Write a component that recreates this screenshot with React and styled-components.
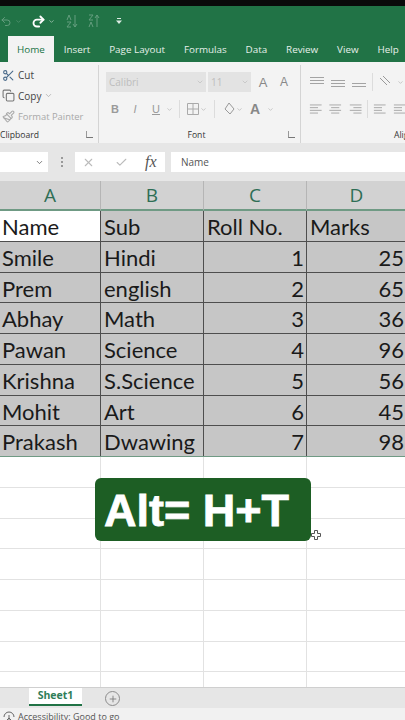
import React from "react";
import styled, { createGlobalStyle } from "styled-components";
import { Scissors, Copy, Paintbrush, X, Check, Plus, ChevronDown, Redo2, Undo2 } from "lucide-react";

const GlobalStyle = createGlobalStyle`
  html, body { margin: 0; padding: 0; background: #fff; }
  body { font-family: "Open Sans", "Liberation Sans", sans-serif; }
`;

const Page = styled.div`
  width: 405px;
  height: 720px;
  overflow: hidden;
  display: flex;
  flex-direction: column;
  position: relative;
`;

const BlackBar = styled.div`
  height: 6px;
  background: #0a0a0a;
`;

const TitleBar = styled.div`
  height: 30px;
  background: #217346;
  display: flex;
  align-items: center;
  color: #fff;
`;

const QuickIcon = styled.span`
  display: flex;
  width: ${(p) => p.$w || 14}px;
  margin-left: ${(p) => p.$ml || 0}px;
  justify-content: center;
  opacity: ${(p) => (p.$dim ? 0.3 : 1)};
`;

const TabRow = styled.div`
  height: 26px;
  background: #217346;
  display: flex;
  padding-left: 8px;
`;

const Tab = styled.div`
  padding: 0 ${(p) => (p.$active ? 9 : 9.45)}px;
  margin-right: ${(p) => (p.$active ? 0.5 : 0)}px;
  display: flex;
  align-items: center;
  font-size: 9.85px;
  white-space: nowrap;
  background: ${(p) => (p.$active ? "#f3f3f3" : "transparent")};
  color: ${(p) => (p.$active ? "#217346" : "#e6f0ea")};
`;

const Ribbon = styled.div`
  height: 81px;
  background: #f3f3f3;
  display: flex;
`;

const Group = styled.div`
  width: ${(p) => p.$w}px;
  flex: none;
  position: relative;
  display: flex;
  flex-direction: column;
  border-right: ${(p) => (p.$last ? "none" : "1px solid #d4d4d4")};
  margin: 3px 0 0;
`;

const GroupBody = styled.div`
  height: 62px;
  flex: none;
  box-sizing: border-box;
  display: flex;
  flex-direction: column;
  gap: ${(p) => p.$gap || 0}px;
  padding: ${(p) => p.$pad || "0"};
`;

const GroupLabel = styled.div`
  height: 16px;
  font-size: 8.6px;
  line-height: 16px;
  color: #333;
  text-align: ${(p) => p.$align || "center"};
  padding-left: ${(p) => p.$pl || 0}px;
  padding-right: ${(p) => p.$pr || 0}px;
  white-space: nowrap;
`;

const Launcher = styled.span`
  position: absolute;
  right: 5px;
  bottom: 5px;
  width: 6px;
  height: 6px;
  border-left: 1px solid #999;
  border-bottom: 1px solid #777;
`;

const ClipRow = styled.div`
  height: 20.5px;
  flex: none;
  display: flex;
  align-items: center;
  gap: 3px;
  padding-left: 2px;
  font-size: ${(p) => (p.$dim ? 9.4 : 10)}px;
  white-space: nowrap;
  color: ${(p) => (p.$dim ? "#a8a8a8" : "#444")};
`;

const ToolRow = styled.div`
  display: flex;
  align-items: center;
  height: ${(p) => p.$h || 20}px;
  gap: ${(p) => p.$gap || 0}px;
`;

const FontBox = styled.div`
  height: 20px;
  width: ${(p) => p.$w}px;
  margin-right: ${(p) => p.$mr || 0}px;
  background: #e3e3e3;
  color: #bdbdbd;
  font-size: 10px;
  line-height: 20px;
  padding: 0 2px 0 3px;
  box-sizing: border-box;
  display: flex;
  align-items: center;
  justify-content: space-between;
`;

const Glyph = styled.span`
  width: ${(p) => p.$w || 16}px;
  text-align: center;
  font-family: "Liberation Sans", sans-serif;
  font-size: ${(p) => p.$size || 11}px;
  font-weight: ${(p) => (p.$bold ? 700 : 400)};
  font-style: ${(p) => (p.$italic ? "italic" : "normal")};
  text-decoration: ${(p) => (p.$under ? "underline" : "none")};
  color: ${(p) => p.$color || "#9a9a9a"};
`;

const Divider = styled.span`
  width: 1px;
  height: 18px;
  background: #dcdcdc;
  margin: 0 ${(p) => p.$m ?? 4}px;
`;

const Gap = styled.div`
  height: 9px;
  background: #e6e6e6;
`;

const FormulaBar = styled.div`
  height: 20px;
  background: #e6e6e6;
  display: flex;
`;

const NameBox = styled.div`
  width: 48px;
  background: #fff;
  display: flex;
  align-items: center;
  justify-content: flex-end;
  padding-right: 4px;
  box-sizing: border-box;
`;

const Dots = styled.div`
  width: 27px;
  display: flex;
  flex-direction: column;
  align-items: center;
  justify-content: center;
  gap: 2px;
  span {
    width: 2px;
    height: 2px;
    background: #999;
  }
`;

const FxBox = styled.div`
  width: 90px;
  background: #fff;
  display: flex;
  align-items: center;
  padding-left: 7px;
  gap: 20px;
  box-sizing: border-box;
  color: #bbb;
`;

const Fx = styled.span`
  font-family: "Liberation Serif", serif;
  font-style: italic;
  font-size: 16px;
  color: #555;
  margin-left: -3px;
`;

const FormulaInput = styled.div`
  flex: 1;
  margin-left: 6px;
  background: #fff;
  font-size: 10px;
  line-height: 20px;
  padding-left: 10px;
  color: #555;
`;

const SheetArea = styled.div`
  flex: 1;
  min-height: 0;
  position: relative;
  overflow: hidden;
  padding-top: 9px;
  background: #e6e6e6;
`;

const Grid = styled.div`
  display: grid;
  grid-template-columns: 101px 103px 103px 100px;
  font-family: Lato, "Liberation Sans", sans-serif;
`;

const ColHead = styled.div`
  height: 30px;
  background: #d2d2d2;
  border-right: 1px solid #b5b5b5;
  border-bottom: 2px solid #6f9a84;
  box-sizing: border-box;
  display: flex;
  align-items: center;
  justify-content: center;
  font-family: "Open Sans", sans-serif;
  font-size: 19px;
  color: #2e6e55;
`;

const Cell = styled.div`
  height: 30.75px;
  box-sizing: border-box;
  background: ${(p) => (p.$white ? "#fff" : "#c6c6c6")};
  border-right: 1px solid #4e4e4e;
  border-bottom: 1px solid #4e4e4e;
  font-size: 22px;
  line-height: 31px;
  color: #1a1a1a;
  padding: 0 2px 0 ${(p) => (p.$first ? 2 : 3)}px;
  white-space: nowrap;
  overflow: hidden;
  text-align: ${(p) => (p.$right ? "right" : "left")};
`;

const Blank = styled.div`
  height: 30.75px;
  box-sizing: border-box;
  background: #fff;
  border-right: 1px solid #e2e2e2;
  border-bottom: 1px solid #e2e2e2;
`;

const SelectLine = styled.div`
  grid-column: 1 / -1;
  height: 1px;
  margin-top: -1px;
  background: #6f9a84;
`;

const Badge = styled.div`
  position: absolute;
  left: 95px;
  top: 306px;
  width: 216px;
  height: 63px;
  border-radius: 6px;
  background: #1d5e24;
  color: #fff;
  font-family: "Liberation Sans", sans-serif;
  font-weight: 700;
  font-size: 45px;
  line-height: 66px;
  padding-left: 9px;
  box-sizing: border-box;
  white-space: nowrap;
  -webkit-text-stroke: 0.8px #fff;
`;

const Cursor = styled.svg`
  position: absolute;
  left: 311px;
  top: 358px;
`;

const SheetTabs = styled.div`
  height: 21px;
  background: #e6e6e6;
  border-top: 1px solid #cfcfcf;
  box-sizing: border-box;
  display: flex;
  align-items: flex-start;
  padding-left: 29px;
`;

const SheetTab = styled.div`
  width: 53px;
  height: 18px;
  background: #fff;
  border-bottom: 2px solid #217346;
  box-sizing: border-box;
  text-align: center;
  font-size: 10.5px;
  line-height: 15px;
  font-weight: 700;
  color: #2f7d58;
`;

const AddSheet = styled.span`
  width: 13px;
  height: 13px;
  margin: 3px 0 0 23px;
  border: 1px solid #8c8c8c;
  border-radius: 50%;
  display: flex;
  align-items: center;
  justify-content: center;
  color: #777;
`;

const StatusBar = styled.div`
  height: 12px;
  background: #f1f1f1;
  display: flex;
  align-items: flex-start;
  gap: 3px;
  padding: 3px 0 0 3px;
  box-sizing: border-box;
  font-size: 9px;
  line-height: 12px;
  color: #555;
  white-space: nowrap;
`;

const Lines = ({ widths, x = "left" }) => (
  <svg width="16" height="14" viewBox="0 0 16 14">
    {widths.map((w, i) => {
      if (!w) return null;
      const x1 = x === "left" ? 1 : x === "right" ? 15 - w : 8 - w / 2;
      return <line key={i} x1={x1} x2={x1 + w} y1={2.5 + i * 3} y2={2.5 + i * 3} stroke="#a3a3a3" strokeWidth="1" />;
    })}
  </svg>
);

const Caret = ({ color = "#aaa", size = 9 }) => <ChevronDown size={size} color={color} strokeWidth={2} />;

const tabs = ["Home", "Insert", "Page Layout", "Formulas", "Data", "Review", "View", "Help"];

const rows = [
  ["Name", "Sub", "Roll No.", "Marks"],
  ["Smile", "Hindi", 1, 25],
  ["Prem", "english", 2, 65],
  ["Abhay", "Math", 3, 36],
  ["Pawan", "Science", 4, 96],
  ["Krishna", "S.Science", 5, 56],
  ["Mohit", "Art", 6, 45],
  ["Prakash", "Dwawing", 7, 98],
];

export default function App() {
  return (
    <Page>
      <GlobalStyle />
      <BlackBar />
      <TitleBar>
        <QuickIcon $w={12} $dim><Undo2 size={13} /></QuickIcon>
        <QuickIcon $w={8} $ml={2} $dim><Caret color="#fff" size={7} /></QuickIcon>
        <QuickIcon $w={16} $ml={8}><Redo2 size={15} strokeWidth={3} /></QuickIcon>
        <QuickIcon $w={8} $ml={1}><Caret color="#cfe2d8" size={7} /></QuickIcon>
        <QuickIcon $w={12} $ml={11} $dim>
          <svg width="12" height="14" viewBox="0 0 12 14" fill="none" stroke="#fff">
            <path d="M1 6l2-5 2 5M1 8h4L1 13h4M9 1v12M7 10l2 3 2-3" />
          </svg>
        </QuickIcon>
        <QuickIcon $w={12} $ml={10} $dim>
          <svg width="12" height="14" viewBox="0 0 12 14" fill="none" stroke="#fff">
            <path d="M1 1h4L1 6h4M1 13l2-5 2 5M9 1v12M7 4l2-3 2 3" />
          </svg>
        </QuickIcon>
        <QuickIcon $w={8} $ml={15}>
          <svg width="6" height="6" viewBox="0 0 6 6" fill="#dcebe3"><path d="M1 0h4v1H1zM0 2.5h6L3 6z" /></svg>
        </QuickIcon>
      </TitleBar>
      <TabRow>
        {tabs.map((t) => <Tab key={t} $active={t === "Home"}>{t}</Tab>)}
      </TabRow>
      <Ribbon>
        <Group $w={98}>
          <GroupBody>
            <ClipRow><Scissors size={13} color="#4a6a8a" />Cut</ClipRow>
            <ClipRow><Copy size={13} color="#777" />Copy<Caret /></ClipRow>
            <ClipRow $dim><Paintbrush size={13} color="#aaa" />Format Painter</ClipRow>
          </GroupBody>
          <GroupLabel $align="left">Clipboard</GroupLabel>
          <Launcher />
        </Group>
        <Group $w={201}>
          <GroupBody $pad="7px 0 0 7px" $gap={8}>
            <ToolRow>
              <FontBox $w={100} $mr={2}>Calibri<Caret color="#bbb" size={8} /></FontBox>
              <FontBox $w={43}>11<Caret color="#bbb" size={8} /></FontBox>
              <Glyph $size={13} $w={24} $color="#888">A</Glyph>
              <Glyph $size={12} $w={18} $color="#888">A</Glyph>
            </ToolRow>
            <ToolRow $h={18}>
              <Glyph $bold $w={18}>B</Glyph>
              <Glyph $italic $w={22}>I</Glyph>
              <Glyph $under $w={20}>U</Glyph>
              <Caret size={7} />
              <Divider $m={6} />
              <svg width="14" height="14" viewBox="0 0 14 14" fill="none" stroke="#aaa"><path d="M1.5 1.5h11v11h-11zM7 1.5v11M1.5 7h11" /></svg>
              <Caret size={7} />
              <Divider $m={7} />
              <svg width="14" height="14" viewBox="0 0 14 14" fill="none" stroke="#999"><path d="M7 1l5 6-4 5-5-5z" /></svg>
              <Caret size={7} />
              <Glyph $bold $size={14} $w={24} $color="#888">A</Glyph>
              <Caret size={7} />
            </ToolRow>
          </GroupBody>
          <GroupLabel $pr={6}>Font</GroupLabel>
          <Launcher />
        </Group>
        <Group $w={106} $last>
          <GroupBody $pad="7px 0 0 8px" $gap={8}>
            <ToolRow $gap={5}>
              <Lines widths={[14, 14, 14]} x="center" />
              <Lines widths={[0, 14, 14, 14]} x="center" />
              <Lines widths={[0, 0, 14, 14]} x="center" />
              <Divider $m={0} />
              <svg width="14" height="14" viewBox="0 0 14 14" fill="none" stroke="#999"><path d="M2 3l7 7M5 1l7 7" /></svg>
              <Caret size={7} />
            </ToolRow>
            <ToolRow $h={18} $gap={5}>
              <Lines widths={[13, 9, 13, 9]} />
              <Lines widths={[13, 9, 13, 9]} x="center" />
              <Lines widths={[13, 9, 13, 9]} x="right" />
              <Divider $m={0} />
              <Lines widths={[13, 9, 9, 13]} />
              <Lines widths={[13, 9, 9, 13]} />
            </ToolRow>
          </GroupBody>
          <GroupLabel $align="left" $pl={93}>Alignment</GroupLabel>
        </Group>
      </Ribbon>
      <Gap />
      <FormulaBar>
        <NameBox><Caret color="#555" size={9} /></NameBox>
        <Dots><span /><span /><span /></Dots>
        <FxBox>
          <X size={13} />
          <Check size={13} />
          <Fx>fx</Fx>
        </FxBox>
        <FormulaInput>Name</FormulaInput>
      </FormulaBar>
      <SheetArea>
        <Grid>
          {["A", "B", "C", "D"].map((c) => <ColHead key={c}>{c}</ColHead>)}
          {rows.map((row, r) =>
            row.map((value, c) => (
              <Cell
                key={`${r}-${c}`}
                $first={c === 0}
                $white={r === 0 && c === 0}
                $right={typeof value === "number"}
              >
                {value}
              </Cell>
            ))
          )}
          <SelectLine />
          {Array.from({ length: 32 }, (_, i) => <Blank key={i} />)}
        </Grid>
        <Badge>Alt= H+T</Badge>
        <Cursor width="10" height="10" viewBox="0 0 10 10">
          <path d="M3.5 .5h3v3h3v3h-3v3h-3v-3h-3v-3h3z" fill="#fff" stroke="#555" />
        </Cursor>
      </SheetArea>
      <SheetTabs>
        <SheetTab>Sheet1</SheetTab>
        <AddSheet><Plus size={10} /></AddSheet>
      </SheetTabs>
      <StatusBar>
        <svg width="12" height="12" viewBox="0 0 12 12" fill="none" stroke="#666"><path d="M1 6a5 5 0 0 1 10 0M6 4v6M3 10l3-3 3 3" /></svg>
        Accessibility: Good to go
      </StatusBar>
    </Page>
  );
}
